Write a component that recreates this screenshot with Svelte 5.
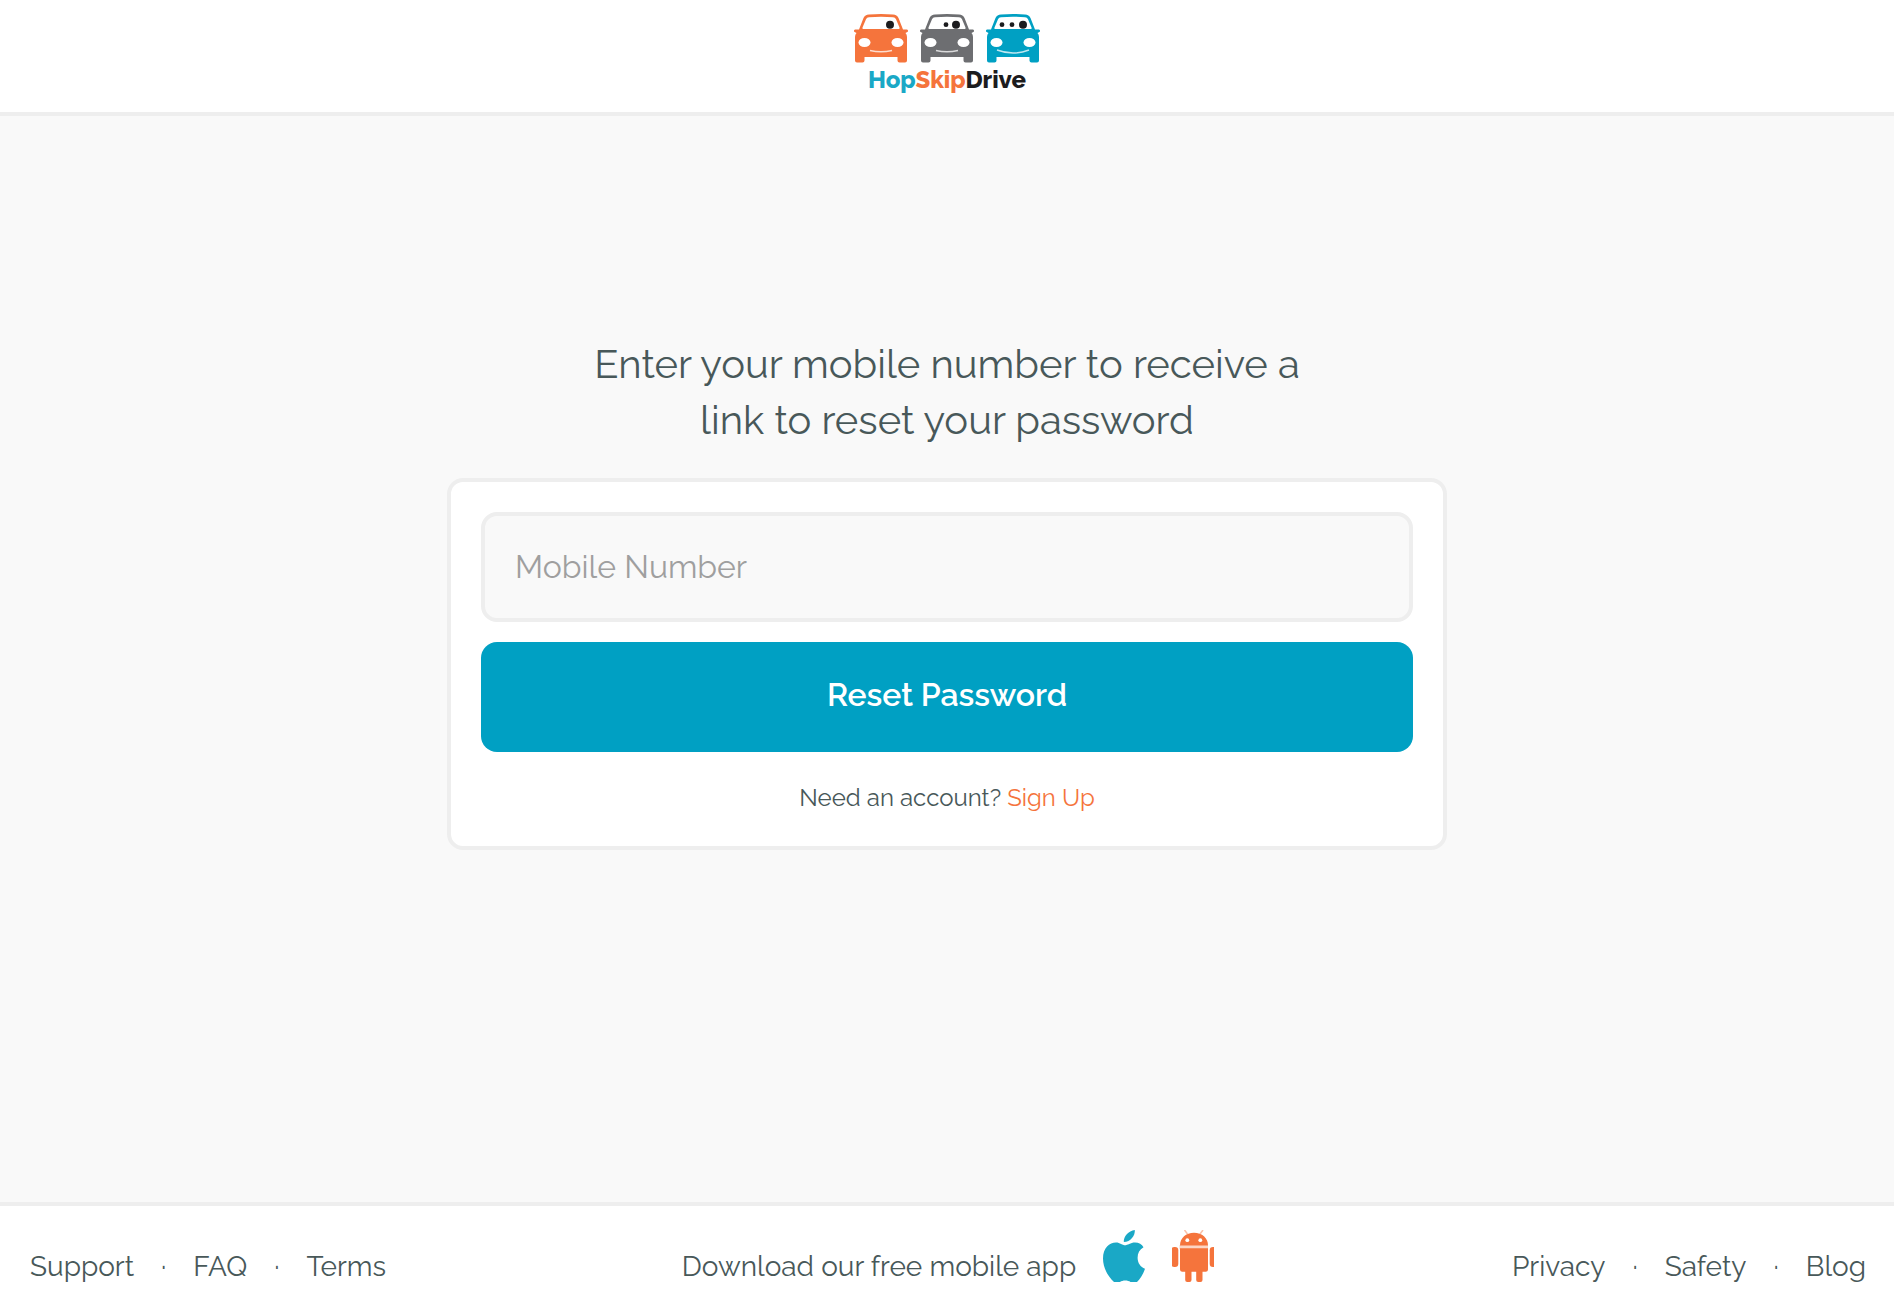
<script lang="ts">
  let phone = $state("");

  // one car per passenger count; dots are the heads behind the windshield
  const cars = [
    { x: 0, color: "#f5743c", dots: [[36, 4]] },
    { x: 66, color: "#6d6e71", dots: [[26, 2.4], [36, 4]] },
    { x: 132, color: "#00a0c3", dots: [[16, 2.4], [26, 2.4], [37, 4]] },
  ];

  const leftLinks = ["Support", "FAQ", "Terms"];
  const rightLinks = ["Privacy", "Safety", "Blog"];

  // TODO: post the number to the password reset endpoint
  function resetPassword(event: Event) {
    event.preventDefault();
  }
</script>

{#snippet linkList(links: string[])}
  {#each links as link, i}
    {#if i > 0}<span aria-hidden="true">·</span>{/if}
    <a href="#{link.toLowerCase()}">{link}</a>
  {/each}
{/snippet}

<div class="page">
  <header>
    <a class="logo" href="#home">
      <svg width="186" height="49" viewBox="0 0 186 49" aria-hidden="true">
        {#each cars as car}
          <g transform="translate({car.x} 0)">
            <path
              fill={car.color}
              d="M15 .6Q27-.6 39 .6Q43 1 44.500 4L49 15.500L53 15.500Q54.500 16 53.800 17.800L51.500 19Q53 20.500 53 23V46.500Q53 48.500 51 48.500H45.500Q43.500 48.500 43.500 46.500V43H10.500V46.500Q10.500 48.500 8.500 48.500H3Q1 48.500 1 46.500V23Q1 20.500 2.500 19L.2 17.800Q-.5 16 1 15.500L5 15.500L9.500 4Q11 1 15 .6Z"
            />
            <path fill="#fff" d="M15 3.300Q27 2.100 39 3.300Q41.200 3.500 42 5.300L45.500 13.500Q46 15 44.500 15H9.500Q8 15 8.500 13.500L12 5.300Q12.800 3.500 15 3.300Z" />
            <ellipse cx="10.500" cy="28.500" rx="6" ry="4.500" fill="#fff" />
            <ellipse cx="43.500" cy="28.500" rx="6" ry="4.500" fill="#fff" />
            <path
              d={car.x === 132 ? "M11 36Q27 42 43 36" : "M16 36.500Q27 39 38 36.500"}
              fill="none"
              stroke="#fff"
              stroke-opacity=".75"
              stroke-width="1.500"
            />
            {#each car.dots as [cx, r]}
              <circle {cx} cy="10.700" {r} fill="#1c1c1e" />
            {/each}
          </g>
        {/each}
      </svg>
      <span class="wordmark"><span class="hop">Hop</span><span class="skip">Skip</span>Drive</span>
    </a>
  </header>

  <main>
    <h1>Enter your mobile number to receive a link to reset your password</h1>

    <form onsubmit={resetPassword}>
      <input type="tel" placeholder="Mobile Number" aria-label="Mobile Number" bind:value={phone} />
      <button type="submit">Reset Password</button>
      <p>Need an account? <a href="#signup">Sign Up</a></p>
    </form>
  </main>

  <footer>
    <nav aria-label="Help">{@render linkList(leftLinks)}</nav>

    <div class="apps">
      <span>Download our free mobile app</span>
      <a href="#ios" aria-label="iPhone app">
        <svg width="42" height="52" viewBox="0 0 42 52" fill="#1aa8c6">
          <path d="M31.800 0C32.300 5.500 27.500 12 20.800 12C20.300 6.500 25.500 1 31.800 0Z" />
          <path d="M22 15.300C24.500 15.300 27.500 12.500 32 12.500C35.800 12.500 39 14.500 40.500 17.300C36.500 19.500 34.500 23.500 34.600 28C34.700 33 37.500 37 42 38.800C40.500 43.500 37.500 48.500 34 52H27.500C25 50 19.500 50 17 52H11C5 46.500 0 38 0 28.500C0 18 6.500 12.500 13 12.500C17 12.500 19.500 15.300 22 15.300Z" />
        </svg>
      </a>
      <a href="#android" aria-label="Android app">
        <svg width="42" height="52" viewBox="0 0 42 52" fill="#f5743c">
          <path d="M12.500 0L15.500 4M31 0L28 4" stroke="#f5743c" stroke-opacity=".45" stroke-width="1.500" />
          <rect x="7.500" y="15" width="28.500" height="4" fill-opacity=".3" />
          <path d="M8 15.500C8 8 14 2.800 22 2.800S36 8 36 15.500Z" />
          <path d="M8 18.300H36V39.500Q36 41.700 33.800 41.700H30.500V50Q30.500 52 28.500 52H26.200Q24.200 52 24.200 50V41.700H19.500V50Q19.500 52 17.500 52H15.200Q13.200 52 13.200 50V41.700H10.200Q8 41.700 8 39.500Z" />
          <rect x="-1" y="17" width="7.300" height="20" rx="3.300" />
          <rect x="37.700" y="17" width="7.300" height="20" rx="3.300" />
          <circle cx="15.300" cy="10.200" r="1.900" fill="#fff" />
          <circle cx="28.300" cy="10.200" r="1.900" fill="#fff" />
        </svg>
      </a>
    </div>

    <nav class="right" aria-label="Company">{@render linkList(rightLinks)}</nav>
  </footer>
</div>

<style>
  :global(body) {
    margin: 0;
    background: #f9f9f9;
  }

  .page {
    display: flex;
    flex-direction: column;
    min-height: 100vh;
    font-family: Raleway, "Open Sans", sans-serif;
    color: #485859;
  }

  a {
    color: inherit;
    text-decoration: none;
  }

  svg {
    display: block;
  }

  header {
    display: flex;
    justify-content: center;
    padding: 14px 0 18px;
    background: #fff;
    border-bottom: 4px solid #eee;
  }

  .logo {
    display: flex;
    flex-direction: column;
    align-items: center;
    gap: 3px;
  }

  .wordmark {
    font-size: 24px;
    font-weight: 800;
    line-height: 28px;
    color: #1c1c1e;
  }
  .hop {
    color: #1aa8c6;
  }
  .skip {
    color: #f5743c;
  }

  main {
    flex: 1;
    display: flex;
    flex-direction: column;
    align-items: center;
    gap: 30px;
    padding: 220px 30px 30px;
  }

  h1 {
    max-width: 760px;
    margin: 0;
    font-size: 40px;
    font-weight: 400;
    line-height: 56px;
    text-align: center;
  }

  form {
    display: flex;
    flex-direction: column;
    gap: 20px;
    box-sizing: border-box;
    width: 100%;
    max-width: 1000px;
    padding: 30px;
    background: #fff;
    border: 4px solid #eee;
    border-radius: 16px;
  }

  input,
  button {
    box-sizing: border-box;
    width: 100%;
    height: 110px;
    font-family: inherit;
    font-size: 32px;
    border-radius: 16px;
  }

  input {
    padding: 0 30px 2px;
    color: #485859;
    background: #f9f9f9;
    border: 4px solid #eee;
    outline: none;
  }
  input::placeholder {
    color: #9f9f9f;
    opacity: 1;
  }
  input:focus {
    border-color: #00a0c3;
  }

  button {
    padding: 0 0 6px;
    font-weight: 600;
    color: #fff;
    background: #00a0c3;
    border: none;
    cursor: pointer;
  }

  form p {
    margin: 12px 0 4px;
    font-size: 24px;
    line-height: 28px;
    text-align: center;
  }
  form p a {
    color: #f5743c;
  }

  footer {
    display: grid;
    grid-template-columns: 1fr auto 1fr;
    align-items: end;
    padding: 24px 28px 32px 30px;
    font-size: 28px;
    line-height: 30px;
    background: #fff;
    border-top: 4px solid #eee;
  }

  nav {
    display: flex;
    gap: 27px;
  }
  .right {
    justify-content: flex-end;
  }

  .apps {
    display: flex;
    align-items: flex-end;
    gap: 27px;
  }
</style>
